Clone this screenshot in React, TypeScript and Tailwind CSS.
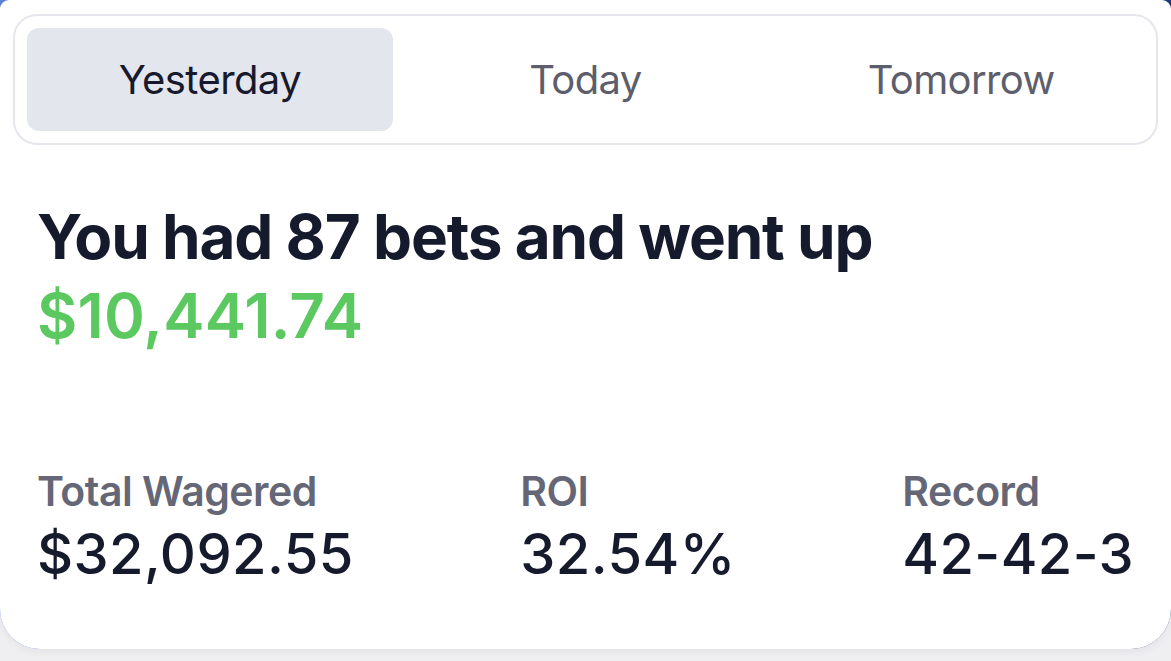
import { useState } from "react";

const tabs = ["Yesterday", "Today", "Tomorrow"];

const stats = [
  { label: "Total Wagered", value: "$32,092.55" },
  { label: "ROI", value: "32.54%" },
  { label: "Record", value: "42-42-3" },
];

const App = () => {
  const [active, setActive] = useState("Yesterday");

  return (
    <div className="h-[661px] w-full bg-[#efeff1] font-['Inter',sans-serif] antialiased">
      <div className="h-[649px] rounded-b-[40px] bg-[linear-gradient(90deg,#5f80d2,#8aa3e0_40%,#3a5aa8_80%,#1b367c)] shadow-[0_3px_8px_rgba(0,0,0,0.05)]">
        <div className="flex h-full flex-col rounded-t-[9px] rounded-b-[40px] bg-white pt-[14px]">
          <div className="mx-[13px] grid h-[131px] grid-cols-3 gap-[10px] rounded-[24px] border-2 border-[#e6e7ec] p-[12px]">
            {tabs.map((tab) => (
              <button
                key={tab}
                onClick={() => setActive(tab)}
                className={
                  active === tab
                    ? "rounded-[12px] bg-[#e4e6ee] text-[40px] tracking-[-0.6px] text-[#171a2c]"
                    : "rounded-[12px] text-[40px] tracking-[-0.6px] text-[#5d5e6c]"
                }
              >
                {tab}
              </button>
            ))}
          </div>

          <div className="px-[37px] pt-[52px]">
            <h1 className="text-[62px] font-bold leading-[79px] tracking-[-1.2px] text-[#161a2d]">
              You had 87 bets and went up
            </h1>
            <p className="text-[62px] font-semibold leading-[79px] tracking-[0.2px] text-[#5bc860]">
              $10,441.74
            </p>
          </div>

          <div className="mt-auto flex justify-between px-[37px] pb-[60px]">
            {stats.map((s) => (
              <div key={s.label}>
                <p className="text-[41px] font-semibold leading-[56px] tracking-[-0.5px] text-[#666776]">
                  {s.label}
                </p>
                <p className="text-[56px] font-medium leading-[70px] tracking-[0.4px] text-[#161a2d]">
                  {s.value}
                </p>
              </div>
            ))}
          </div>
        </div>
      </div>
    </div>
  );
};

export default App;
